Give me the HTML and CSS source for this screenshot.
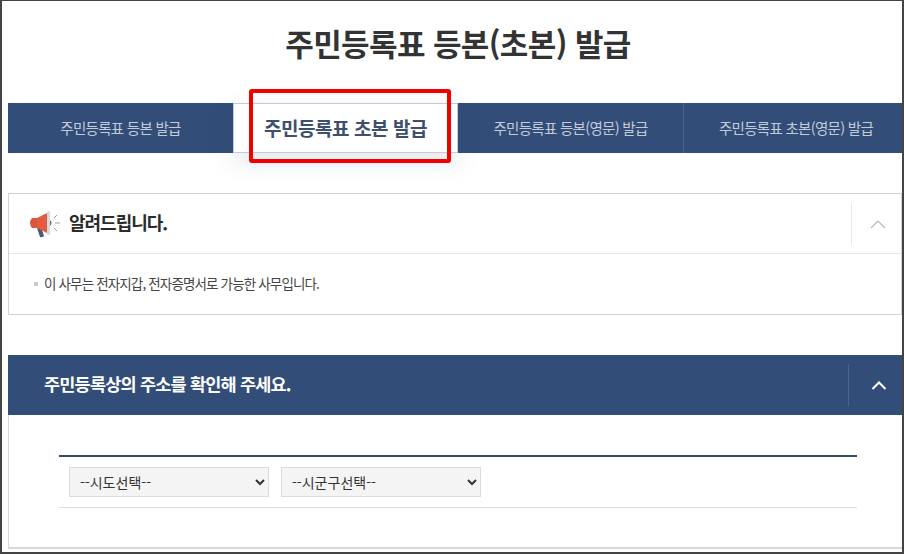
FILE: index.html
```html
<!DOCTYPE html>
<html lang="ko">
<head>
<meta charset="utf-8">
<title>주민등록표 등본(초본) 발급</title>
<link rel="stylesheet" href="styles.css">
</head>
<body>
<div class="frame">
  <div class="page">
    <h1 class="title">주민등록표 등본(초본) 발급</h1>
    <div class="tabs">
      <a class="tab">주민등록표 등본 발급</a>
      <a class="tab active">주민등록표 초본 발급</a>
      <a class="tab">주민등록표 등본(영문) 발급</a>
      <a class="tab sep">주민등록표 초본(영문) 발급</a>
      <div class="highlight"></div>
    </div>
    <section class="notice">
      <div class="notice-head">
        <svg class="horn" width="34" height="30" viewBox="0 0 34 30">
          <path d="M9 19 L13 18 L16 27 Q14 29 12 28 Z" fill="#4f5a6e"/>
          <path d="M4 9 H9 V19 H4 Q0 14 4 9 Z" fill="#d9573f"/>
          <path d="M9 9 L19 4 V24 L9 19 Z" fill="#e25c40"/>
          <rect x="19" y="2" width="3" height="24" rx="1.5" fill="#d8d8de"/>
          <path d="M22 11 Q25 14 22 17 Z" fill="#8a5a68"/>
          <path d="M26 9 L29 6 M27 14 H32 M26 19 L29 22" stroke="#9a9a9a" stroke-width="1" fill="none"/>
        </svg>
        <h2 class="notice-title">알려드립니다.</h2>
        <div class="toggle">
          <svg width="16" height="10" viewBox="0 0 16 10"><path d="M1 9 L8 2 L15 9" fill="none" stroke="#b8b8b8" stroke-width="1.2"/></svg>
        </div>
      </div>
      <ul class="notice-body">
        <li>이 사무는 전자지갑, 전자증명서로 가능한 사무입니다.</li>
      </ul>
    </section>
    <section class="address">
      <div class="address-head">
        <h2 class="address-title">주민등록상의 주소를 확인해 주세요.</h2>
        <div class="toggle light">
          <svg width="16" height="10" viewBox="0 0 16 10"><path d="M1.5 9 L8 2.5 L14.5 9" fill="none" stroke="#ffffff" stroke-width="2"/></svg>
        </div>
      </div>
      <div class="address-body">
        <div class="select-row">
          <select class="pick"><option>--시도선택--</option></select>
          <select class="pick"><option>--시군구선택--</option></select>
        </div>
      </div>
    </section>
  </div>
</div>
</body>
</html>
```
FILE: styles.css
```css
* { box-sizing: border-box; }
html, body { margin: 0; padding: 0; background: #fff; }
body { width: 904px; height: 554px; overflow: hidden; font-family: "Noto Sans CJK KR", "Noto Sans", sans-serif; }
.frame { width: 904px; height: 554px; border: solid #444; border-width: 1px 2px 2px 2px; overflow: hidden; background: #fff; }
.page { margin-left: 6px; }
.title { margin: 0; height: 102px; padding: 20px 0 0 6px; text-align: center; font-size: 31px; line-height: 44px; font-weight: 700; color: #333; letter-spacing: -0.6px; }
.tabs { position: relative; display: grid; grid-template-columns: 225px 225px 225px 219px; height: 50px; background: #324d78; }
.tab { display: flex; align-items: center; justify-content: center; padding-bottom: 2px; font-size: 14.5px; letter-spacing: -0.7px; color: #c3cbd8; }
.tab.sep { border-left: 1px solid #4a6490; padding-left: 6px; }
.tab.active { background: #fff; border: 1px solid #c5cad4; color: #3d4f6c; font-size: 19px; font-weight: 700; letter-spacing: -0.45px; box-shadow: 0 8px 24px rgba(50,77,120,.14); }
.highlight { position: absolute; left: 241px; top: -14px; width: 202px; height: 74px; border: 4px solid #f00000; border-radius: 3px; }
.notice { margin-top: 40px; height: 122px; border: 1px solid #d2d2d2; }
.notice-head { display: flex; align-items: center; height: 60px; border-bottom: 1px solid #e8e8e8; padding-left: 19px; }
.horn { flex: none; margin-right: 7px; }
.notice-title { margin: 0 0 3px; flex: 1; font-size: 18px; font-weight: 700; color: #2b2b2b; letter-spacing: -1px; }
.toggle { flex: none; width: 50px; height: 42px; display: flex; align-items: center; justify-content: center; padding-left: 2px; border-left: 1px solid #e8e8e8; }
.toggle.light { width: 54px; border-left-color: #4a6490; padding-left: 6px; }
.notice-body { margin: 0; padding: 19px 0 0 25px; list-style: none; }
.notice-body li { position: relative; padding-left: 10px; font-size: 13.5px; line-height: 20px; letter-spacing: -0.85px; color: #444; }
.notice-body li::before { content: ""; position: absolute; left: 0; top: 9px; width: 4px; height: 4px; background: #c8c8c8; }
.address { margin-top: 40px; }
.address-head { display: flex; align-items: center; height: 60px; background: #324d78; padding-left: 36px; }
.address-title { margin: 0 0 3px; flex: 1; font-size: 17.5px; font-weight: 700; color: #fff; letter-spacing: -0.8px; }
.address-body { height: 134px; padding: 40px 45px 0 50px; border-left: 1px solid #d8d8d8; border-bottom: 2px solid #d8d8d8; }
.select-row { display: flex; gap: 12px; height: 53px; padding: 10px 0 0 10px; border-top: 2px solid #324d63; border-bottom: 1px solid #ddd; }
.pick { width: 200px; height: 30px; padding: 0 6px; background: #f4f4f4; border: 1px solid #dcdcdc; border-radius: 0; font-family: "Noto Sans CJK KR", sans-serif; font-size: 14px; color: #333; }
```
